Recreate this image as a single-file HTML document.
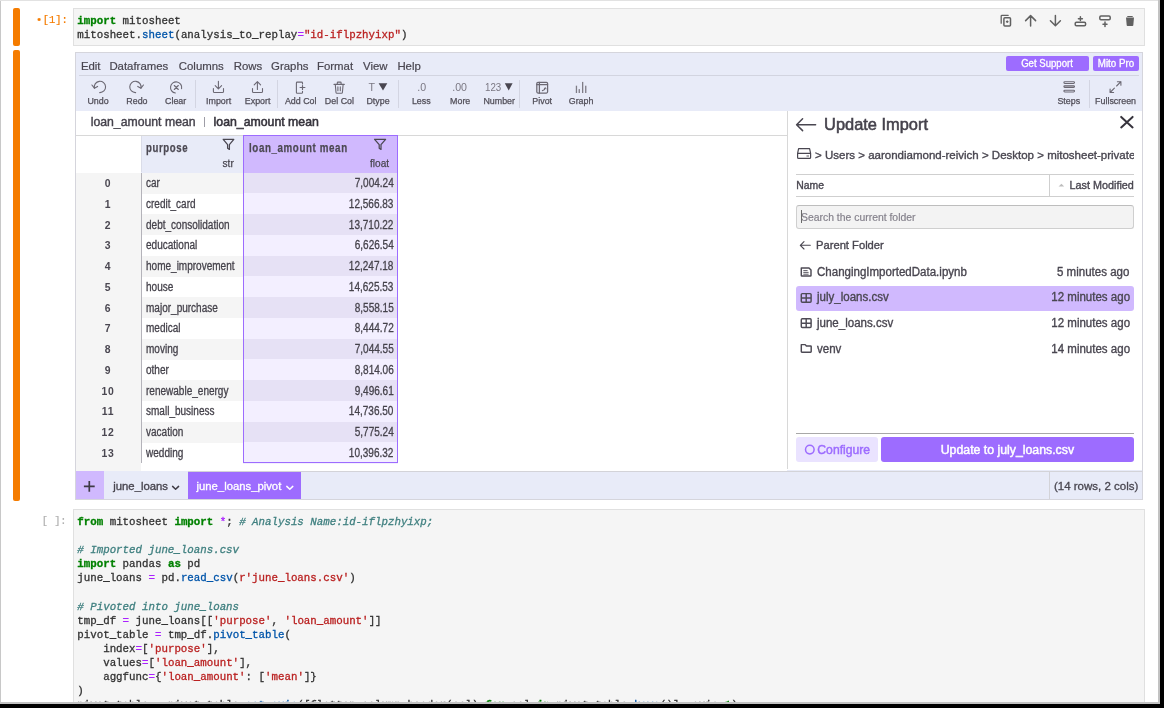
<!DOCTYPE html>
<html><head><meta charset="utf-8"><style>
html,body{margin:0;padding:0;width:1164px;height:708px;overflow:hidden;background:#000;}
#r{will-change:transform;position:relative;width:1164px;height:708px;overflow:hidden;}
#r div{position:absolute;}
#r .t{white-space:pre;}
svg{position:absolute;overflow:visible;}
</style></head><body><div id="r">
<div style="left:0px;top:0px;width:1164px;height:708px;background:#000;"></div>
<div style="left:0px;top:0px;width:1160px;height:704px;background:#fff;"></div>
<div style="left:0px;top:0px;width:1px;height:704px;background:#c8c8c8;"></div>
<div style="left:0px;top:0px;width:1160px;height:1px;background:#e2e2e2;"></div>
<div style="left:1158px;top:0px;width:2px;height:704px;background:#c2c2c2;"></div>
<div style="left:0px;top:702px;width:1160px;height:2px;background:#c2c2c2;"></div>
<div style="left:13px;top:8px;width:7px;height:38px;background:#F57C00;border-radius:2px;"></div>
<div style="left:13px;top:50px;width:7px;height:451px;background:#F57C00;border-radius:2px;"></div>
<div style="left:73px;top:8px;width:1072px;height:38px;background:#F5F5F5;box-sizing:border-box;border:1px solid #E0E0E0;"></div>
<div class="t" style="left:36.1px;top:15.30px;font:normal 10.4px/10.4px 'Liberation Mono',monospace;color:#F57C00;transform-origin:left;-webkit-text-stroke:0.2px #F57C00;">•</div>
<div class="t" style="right:1096.2px;top:15.20px;font:normal 10.4px/10.4px 'Liberation Mono',monospace;color:#F57C00;transform-origin:right;-webkit-text-stroke:0.2px #F57C00;">[1]:</div>
<div class="t" style="left:77.3px;top:16.20px;font:normal 10.79px/10.79px 'Liberation Mono',monospace;color:#008000;transform-origin:left;-webkit-text-stroke:0.3px #008000;font-weight:bold;">import</div>
<div class="t" style="left:116.144px;top:16.20px;font:normal 10.79px/10.79px 'Liberation Mono',monospace;color:#333333;transform-origin:left;-webkit-text-stroke:0.3px #333333;"> mitosheet</div>
<div class="t" style="left:77.3px;top:30.20px;font:normal 10.79px/10.79px 'Liberation Mono',monospace;color:#333333;transform-origin:left;-webkit-text-stroke:0.3px #333333;">mitosheet.</div>
<div class="t" style="left:142.04000000000002px;top:30.20px;font:normal 10.79px/10.79px 'Liberation Mono',monospace;color:#0055AA;transform-origin:left;-webkit-text-stroke:0.3px #0055AA;">sheet</div>
<div class="t" style="left:174.41000000000003px;top:30.20px;font:normal 10.79px/10.79px 'Liberation Mono',monospace;color:#333333;transform-origin:left;-webkit-text-stroke:0.3px #333333;">(analysis_to_replay</div>
<div class="t" style="left:297.41600000000005px;top:30.20px;font:normal 10.79px/10.79px 'Liberation Mono',monospace;color:#AA22FF;transform-origin:left;-webkit-text-stroke:0.3px #AA22FF;">=</div>
<div class="t" style="left:303.89000000000004px;top:30.20px;font:normal 10.79px/10.79px 'Liberation Mono',monospace;color:#BA2121;transform-origin:left;-webkit-text-stroke:0.3px #BA2121;">&quot;id-iflpzhyixp&quot;</div>
<div class="t" style="left:401.00000000000006px;top:30.20px;font:normal 10.79px/10.79px 'Liberation Mono',monospace;color:#333333;transform-origin:left;-webkit-text-stroke:0.3px #333333;">)</div>
<div style="left:75px;top:52px;width:1068px;height:448px;background:#E8EBF8;box-sizing:border-box;border:1px solid #D5D5DC;"></div>
<div class="t" style="left:80.9px;top:60.60px;font:normal 11.4px/11.4px 'Liberation Sans',sans-serif;color:#494650;transform-origin:left;-webkit-text-stroke:0.2px #494650;">Edit</div>
<div class="t" style="left:109.4px;top:60.60px;font:normal 11.4px/11.4px 'Liberation Sans',sans-serif;color:#494650;transform-origin:left;-webkit-text-stroke:0.2px #494650;">Dataframes</div>
<div class="t" style="left:178.8px;top:60.60px;font:normal 11.4px/11.4px 'Liberation Sans',sans-serif;color:#494650;transform-origin:left;-webkit-text-stroke:0.2px #494650;">Columns</div>
<div class="t" style="left:233.8px;top:60.60px;font:normal 11.4px/11.4px 'Liberation Sans',sans-serif;color:#494650;transform-origin:left;-webkit-text-stroke:0.2px #494650;">Rows</div>
<div class="t" style="left:271.09999999999997px;top:60.60px;font:normal 11.4px/11.4px 'Liberation Sans',sans-serif;color:#494650;transform-origin:left;-webkit-text-stroke:0.2px #494650;">Graphs</div>
<div class="t" style="left:317.0px;top:60.60px;font:normal 11.4px/11.4px 'Liberation Sans',sans-serif;color:#494650;transform-origin:left;-webkit-text-stroke:0.2px #494650;">Format</div>
<div class="t" style="left:363.0px;top:60.60px;font:normal 11.4px/11.4px 'Liberation Sans',sans-serif;color:#494650;transform-origin:left;-webkit-text-stroke:0.2px #494650;">View</div>
<div class="t" style="left:397.4px;top:60.60px;font:normal 11.4px/11.4px 'Liberation Sans',sans-serif;color:#494650;transform-origin:left;-webkit-text-stroke:0.2px #494650;">Help</div>
<div style="left:79px;top:75px;width:1060px;height:1px;background:#D2D4E0;"></div>
<div style="left:1006.4px;top:56.4px;width:82.4px;height:14.4px;background:#9D6CFF;border-radius:2px;"></div>
<div class="t" style="left:547.4000000000001px;width:1000px;text-align:center;top:58.90px;font:normal 10.1px/10.1px 'Liberation Sans',sans-serif;color:#fff;transform:scaleX(0.95);transform-origin:center;-webkit-text-stroke:0.3px #fff;">Get Support</div>
<div style="left:1093.4px;top:56.4px;width:45.6px;height:14.4px;background:#9D6CFF;border-radius:2px;"></div>
<div class="t" style="left:616.0999999999999px;width:1000px;text-align:center;top:58.90px;font:normal 10.1px/10.1px 'Liberation Sans',sans-serif;color:#fff;transform:scaleX(0.97);transform-origin:center;-webkit-text-stroke:0.3px #fff;">Mito Pro</div>
<div class="t" style="left:-402px;width:1000px;text-align:center;top:97.10px;font:normal 8.9px/8.9px 'Liberation Sans',sans-serif;color:#514e58;transform-origin:center;-webkit-text-stroke:0.25px #514e58;">Undo</div>
<div class="t" style="left:-363.1px;width:1000px;text-align:center;top:97.10px;font:normal 8.9px/8.9px 'Liberation Sans',sans-serif;color:#514e58;transform-origin:center;-webkit-text-stroke:0.25px #514e58;">Redo</div>
<div class="t" style="left:-324.4px;width:1000px;text-align:center;top:97.10px;font:normal 8.9px/8.9px 'Liberation Sans',sans-serif;color:#514e58;transform-origin:center;-webkit-text-stroke:0.25px #514e58;">Clear</div>
<div class="t" style="left:-281.4px;width:1000px;text-align:center;top:97.10px;font:normal 8.9px/8.9px 'Liberation Sans',sans-serif;color:#514e58;transform-origin:center;-webkit-text-stroke:0.25px #514e58;">Import</div>
<div class="t" style="left:-242.39999999999998px;width:1000px;text-align:center;top:97.10px;font:normal 8.9px/8.9px 'Liberation Sans',sans-serif;color:#514e58;transform-origin:center;-webkit-text-stroke:0.25px #514e58;">Export</div>
<div class="t" style="left:-199.3px;width:1000px;text-align:center;top:97.10px;font:normal 8.9px/8.9px 'Liberation Sans',sans-serif;color:#514e58;transform-origin:center;-webkit-text-stroke:0.25px #514e58;">Add Col</div>
<div class="t" style="left:-160.60000000000002px;width:1000px;text-align:center;top:97.10px;font:normal 8.9px/8.9px 'Liberation Sans',sans-serif;color:#514e58;transform-origin:center;-webkit-text-stroke:0.25px #514e58;">Del Col</div>
<div class="t" style="left:-122px;width:1000px;text-align:center;top:97.10px;font:normal 8.9px/8.9px 'Liberation Sans',sans-serif;color:#514e58;transform-origin:center;-webkit-text-stroke:0.25px #514e58;">Dtype</div>
<div class="t" style="left:-78.69999999999999px;width:1000px;text-align:center;top:97.10px;font:normal 8.9px/8.9px 'Liberation Sans',sans-serif;color:#514e58;transform-origin:center;-webkit-text-stroke:0.25px #514e58;">Less</div>
<div class="t" style="left:-39.80000000000001px;width:1000px;text-align:center;top:97.10px;font:normal 8.9px/8.9px 'Liberation Sans',sans-serif;color:#514e58;transform-origin:center;-webkit-text-stroke:0.25px #514e58;">More</div>
<div class="t" style="left:-0.8000000000000114px;width:1000px;text-align:center;top:97.10px;font:normal 8.9px/8.9px 'Liberation Sans',sans-serif;color:#514e58;transform-origin:center;-webkit-text-stroke:0.25px #514e58;">Number</div>
<div class="t" style="left:42.200000000000045px;width:1000px;text-align:center;top:97.10px;font:normal 8.9px/8.9px 'Liberation Sans',sans-serif;color:#514e58;transform-origin:center;-webkit-text-stroke:0.25px #514e58;">Pivot</div>
<div class="t" style="left:81.10000000000002px;width:1000px;text-align:center;top:97.10px;font:normal 8.9px/8.9px 'Liberation Sans',sans-serif;color:#514e58;transform-origin:center;-webkit-text-stroke:0.25px #514e58;">Graph</div>
<div class="t" style="left:568.8px;width:1000px;text-align:center;top:97.10px;font:normal 8.9px/8.9px 'Liberation Sans',sans-serif;color:#514e58;transform-origin:center;-webkit-text-stroke:0.25px #514e58;">Steps</div>
<div class="t" style="left:615.5999999999999px;width:1000px;text-align:center;top:97.10px;font:normal 8.9px/8.9px 'Liberation Sans',sans-serif;color:#514e58;transform-origin:center;-webkit-text-stroke:0.25px #514e58;">Fullscreen</div>
<div style="left:195.1px;top:80px;width:1px;height:28px;background:#D3D5E2;"></div>
<div style="left:277.0px;top:80px;width:1px;height:28px;background:#D3D5E2;"></div>
<div style="left:398.1px;top:80px;width:1px;height:28px;background:#D3D5E2;"></div>
<div style="left:518.6px;top:80px;width:1px;height:28px;background:#D3D5E2;"></div>
<div style="left:1088.6px;top:80px;width:1px;height:28px;background:#D3D5E2;"></div>
<svg style="left:0;top:0" width="1164" height="708" viewBox="0 0 1164 708">
<g fill="none" stroke="#6b6873" stroke-width="1.1" stroke-linecap="round" stroke-linejoin="round">
<!-- undo -->
<path d="M94.4 88.1 A5.65 5.65 0 1 1 99.7 92.6"/><path d="M91.9 85 L94.4 88.2 L97.6 86.4"/>
<!-- redo -->
<path d="M140.95 88.1 A5.65 5.65 0 1 0 135.65 92.6"/><path d="M143.45 85 L140.95 88.2 L137.75 86.4"/>
<!-- clear -->
<path d="M181.6 88.6 A5.6 5.6 0 1 0 175.4 93.0"/><path d="M174.3 85.5 L178.3 89.5 M178.3 85.5 L174.3 89.5"/>
<!-- import -->
<path d="M218.4 81.2 V88.6 M215.2 85.6 L218.4 88.8 L221.6 85.6"/><path d="M213.4 88.6 V91.4 Q213.4 92.5 214.5 92.5 H222.4 Q223.5 92.5 223.5 91.4 V88.6"/>
<!-- export -->
<path d="M257.4 89.4 V81.8 M254.2 84.8 L257.4 81.6 L260.6 84.8"/><path d="M252.5 88.6 V91.4 Q252.5 92.5 253.6 92.5 H261.4 Q262.5 92.5 262.5 91.4 V88.6"/>
<!-- add col -->
<path d="M302.5 83.9 V82.9 Q302.5 82.1 301.7 82.1 H297.2 Q296.4 82.1 296.4 82.9 V92.4 Q296.4 93.2 297.2 93.2 H301.7 Q302.5 93.2 302.5 92.4 V91.2"/><path d="M300.1 87.5 H304.9 M302.5 85.7 V89.4" stroke-width="1.2"/>
<!-- del col -->
<path d="M334 84.4 H344.3 M337.3 84.2 V82.8 Q337.3 82.1 338 82.1 H340.4 Q341.1 82.1 341.1 82.8 V84.2"/><path d="M335.3 84.6 L336 92.5 Q336.1 93.3 336.9 93.3 H341.5 Q342.3 93.3 342.4 92.5 L343.1 84.6"/><path d="M337.9 86.9 V90.7 M340.3 86.9 V90.7"/>
<!-- pivot -->
<rect x="536.8" y="82.4" width="10.8" height="10.6" rx="1.2" stroke-width="1.25"/><path d="M536.8 84.5 H547.6 M539.4 82.4 V93" stroke-width="1.25"/><path d="M542.4 90.6 Q544.8 90.4 545.2 88.1" stroke-width="1.1"/><path d="M544.1 88.9 L545.2 87.7 L546.2 88.9" stroke-width="0.9"/>
<!-- steps -->
<rect x="1063.9" y="81.7" width="10.6" height="1.8" rx="0.9"/><rect x="1063.9" y="85.7" width="10.6" height="1.8" rx="0.9" fill="#a9a7b0"/><rect x="1063.9" y="90.2" width="10.6" height="1.8" rx="0.9"/>
<!-- fullscreen -->
<path d="M1116.6 86 L1120.9 81.7 M1117.4 81.7 H1120.9 V85.2"/><path d="M1114.4 88.2 L1110.1 92.5 M1113.6 92.5 H1110.1 V89"/>
</g>
<g fill="#7f7c86">
<!-- graph bars -->
<rect x="575.8" y="85.7" width="1.3" height="7.3"/><rect x="578.6" y="89.1" width="1.3" height="3.9"/><rect x="582" y="81.9" width="1.3" height="11.1"/><rect x="585.1" y="85.7" width="1.3" height="7.3"/>
</g>
</svg>
<div class="t" style="left:368.6px;top:82.4px;font:normal 10.6px/10.6px 'Liberation Sans',sans-serif;color:#7b7883;">T</div>
<svg style="left:0;top:0" width="1164" height="708"><path d="M378.6 83.3 H387.3 L383 90.6 Z" fill="#494650"/><path d="M504.8 83.3 H512.6 L508.7 90.6 Z" fill="#494650"/></svg>
<div class="t" style="left:417.2px;top:82.0px;font:normal 10.6px/10.6px 'Liberation Sans',sans-serif;color:#7b7883;">.0</div>
<div class="t" style="left:452.2px;top:82.0px;font:normal 10.6px/10.6px 'Liberation Sans',sans-serif;color:#7b7883;">.00</div>
<div class="t" style="left:485.2px;top:82.0px;font:normal 10.6px/10.6px 'Liberation Sans',sans-serif;color:#7b7883;transform:scaleX(0.92);transform-origin:left;">123</div>
<svg style="left:0;top:0" width="1164" height="708">
<g fill="none" stroke="#616161" stroke-width="1.5" stroke-linecap="round" stroke-linejoin="round">
<rect x="1003.9" y="17.7" width="6.6" height="8.4" rx="1"/><path d="M1001.2 23.2 V16.1 Q1001.2 15.3 1002 15.3 H1008.2" stroke-width="1.3"/><path d="M1007.2 20.9 V22.5 M1006.4 21.7 H1008" stroke-width="1.2"/>
<path d="M1030.6 26 V15.8 M1025.6 20.6 L1030.6 15.6 L1035.6 20.6"/>
<path d="M1055.4 15.4 V25.6 M1050.4 20.8 L1055.4 25.8 L1060.4 20.8"/>
<rect x="1075.2" y="22.2" width="10.4" height="3.6" rx="1.2"/><path d="M1080.4 16.8 V20.6 M1078.4 18.7 H1082.4"/>
<rect x="1099.8" y="16.1" width="10.4" height="3.6" rx="1.2"/><path d="M1105 22 V26.4 M1103 24.2 H1107"/>
</g>
<path d="M1126 17.6 H1134 L1133.3 25.2 Q1133.2 25.9 1132.5 25.9 H1127.5 Q1126.8 25.9 1126.7 25.2 Z M1127.6 16 H1132.4 L1133 17 H1127 Z" fill="#616161"/>
</svg>
<div style="left:75px;top:111px;width:712px;height:24px;background:#fff;"></div>
<div class="t" style="left:90.7px;top:116.30px;font:normal 12.25px/12.25px 'Liberation Sans',sans-serif;color:#45424c;transform-origin:left;-webkit-text-stroke:0.4px #45424c;">loan_amount mean</div>
<div style="left:204.2px;top:117.2px;width:1.1px;height:10.2px;background:#9e9da6;"></div>
<div class="t" style="left:213.6px;top:116.30px;font:normal 12.3px/12.3px 'Liberation Sans',sans-serif;color:#36333c;transform-origin:left;-webkit-text-stroke:0.55px #36333c;">loan_amount mean</div>
<div style="left:75px;top:135.4px;width:712px;height:335.6px;background:#fff;"></div>
<div style="left:75px;top:172.5px;width:66.4px;height:298.5px;background:#F5F5F5;"></div>
<div style="left:141.4px;top:135.4px;width:101.8px;height:37.7px;background:#E8EBF8;"></div>
<div style="left:243.2px;top:135.4px;width:155.3px;height:37.7px;background:#D0B9FE;"></div>
<div style="left:141.4px;top:172.5px;width:101.8px;height:21.360000000000003px;background:#F5F5F5;"></div>
<div style="left:243.2px;top:172.5px;width:155.3px;height:21.360000000000003px;background:#E6E1F5;"></div>
<div class="t" style="left:-392.2px;width:1000px;text-align:center;top:178.10px;font:bold 11.8px/11.8px 'Liberation Sans',sans-serif;color:#4a4751;transform:scaleX(0.88);transform-origin:center;letter-spacing:0.8px;">0</div>
<div class="t" style="left:146.4px;top:177.10px;font:normal 12px/12px 'Liberation Sans',sans-serif;color:#45424b;transform:scaleX(0.835);transform-origin:left;-webkit-text-stroke:0.3px #45424b;">car</div>
<div class="t" style="right:770.4px;top:177.10px;font:normal 12px/12px 'Liberation Sans',sans-serif;color:#45424b;transform:scaleX(0.835);transform-origin:right;-webkit-text-stroke:0.3px #45424b;">7,004.24</div>
<div style="left:243.2px;top:193.26px;width:155.3px;height:21.360000000000003px;background:#F3EFFF;"></div>
<div class="t" style="left:-392.2px;width:1000px;text-align:center;top:198.86px;font:bold 11.8px/11.8px 'Liberation Sans',sans-serif;color:#4a4751;transform:scaleX(0.88);transform-origin:center;letter-spacing:0.8px;">1</div>
<div class="t" style="left:146.4px;top:197.86px;font:normal 12px/12px 'Liberation Sans',sans-serif;color:#45424b;transform:scaleX(0.835);transform-origin:left;-webkit-text-stroke:0.3px #45424b;">credit_card</div>
<div class="t" style="right:770.4px;top:197.86px;font:normal 12px/12px 'Liberation Sans',sans-serif;color:#45424b;transform:scaleX(0.835);transform-origin:right;-webkit-text-stroke:0.3px #45424b;">12,566.83</div>
<div style="left:141.4px;top:214.02px;width:101.8px;height:21.360000000000003px;background:#F5F5F5;"></div>
<div style="left:243.2px;top:214.02px;width:155.3px;height:21.360000000000003px;background:#E6E1F5;"></div>
<div class="t" style="left:-392.2px;width:1000px;text-align:center;top:219.62px;font:bold 11.8px/11.8px 'Liberation Sans',sans-serif;color:#4a4751;transform:scaleX(0.88);transform-origin:center;letter-spacing:0.8px;">2</div>
<div class="t" style="left:146.4px;top:218.62px;font:normal 12px/12px 'Liberation Sans',sans-serif;color:#45424b;transform:scaleX(0.835);transform-origin:left;-webkit-text-stroke:0.3px #45424b;">debt_consolidation</div>
<div class="t" style="right:770.4px;top:218.62px;font:normal 12px/12px 'Liberation Sans',sans-serif;color:#45424b;transform:scaleX(0.835);transform-origin:right;-webkit-text-stroke:0.3px #45424b;">13,710.22</div>
<div style="left:243.2px;top:234.78px;width:155.3px;height:21.360000000000003px;background:#F3EFFF;"></div>
<div class="t" style="left:-392.2px;width:1000px;text-align:center;top:240.38px;font:bold 11.8px/11.8px 'Liberation Sans',sans-serif;color:#4a4751;transform:scaleX(0.88);transform-origin:center;letter-spacing:0.8px;">3</div>
<div class="t" style="left:146.4px;top:239.38px;font:normal 12px/12px 'Liberation Sans',sans-serif;color:#45424b;transform:scaleX(0.835);transform-origin:left;-webkit-text-stroke:0.3px #45424b;">educational</div>
<div class="t" style="right:770.4px;top:239.38px;font:normal 12px/12px 'Liberation Sans',sans-serif;color:#45424b;transform:scaleX(0.835);transform-origin:right;-webkit-text-stroke:0.3px #45424b;">6,626.54</div>
<div style="left:141.4px;top:255.54000000000002px;width:101.8px;height:21.360000000000003px;background:#F5F5F5;"></div>
<div style="left:243.2px;top:255.54000000000002px;width:155.3px;height:21.360000000000003px;background:#E6E1F5;"></div>
<div class="t" style="left:-392.2px;width:1000px;text-align:center;top:261.14px;font:bold 11.8px/11.8px 'Liberation Sans',sans-serif;color:#4a4751;transform:scaleX(0.88);transform-origin:center;letter-spacing:0.8px;">4</div>
<div class="t" style="left:146.4px;top:260.14px;font:normal 12px/12px 'Liberation Sans',sans-serif;color:#45424b;transform:scaleX(0.835);transform-origin:left;-webkit-text-stroke:0.3px #45424b;">home_improvement</div>
<div class="t" style="right:770.4px;top:260.14px;font:normal 12px/12px 'Liberation Sans',sans-serif;color:#45424b;transform:scaleX(0.835);transform-origin:right;-webkit-text-stroke:0.3px #45424b;">12,247.18</div>
<div style="left:243.2px;top:276.3px;width:155.3px;height:21.360000000000003px;background:#F3EFFF;"></div>
<div class="t" style="left:-392.2px;width:1000px;text-align:center;top:281.90px;font:bold 11.8px/11.8px 'Liberation Sans',sans-serif;color:#4a4751;transform:scaleX(0.88);transform-origin:center;letter-spacing:0.8px;">5</div>
<div class="t" style="left:146.4px;top:280.90px;font:normal 12px/12px 'Liberation Sans',sans-serif;color:#45424b;transform:scaleX(0.835);transform-origin:left;-webkit-text-stroke:0.3px #45424b;">house</div>
<div class="t" style="right:770.4px;top:280.90px;font:normal 12px/12px 'Liberation Sans',sans-serif;color:#45424b;transform:scaleX(0.835);transform-origin:right;-webkit-text-stroke:0.3px #45424b;">14,625.53</div>
<div style="left:141.4px;top:297.06px;width:101.8px;height:21.360000000000003px;background:#F5F5F5;"></div>
<div style="left:243.2px;top:297.06px;width:155.3px;height:21.360000000000003px;background:#E6E1F5;"></div>
<div class="t" style="left:-392.2px;width:1000px;text-align:center;top:302.66px;font:bold 11.8px/11.8px 'Liberation Sans',sans-serif;color:#4a4751;transform:scaleX(0.88);transform-origin:center;letter-spacing:0.8px;">6</div>
<div class="t" style="left:146.4px;top:301.66px;font:normal 12px/12px 'Liberation Sans',sans-serif;color:#45424b;transform:scaleX(0.835);transform-origin:left;-webkit-text-stroke:0.3px #45424b;">major_purchase</div>
<div class="t" style="right:770.4px;top:301.66px;font:normal 12px/12px 'Liberation Sans',sans-serif;color:#45424b;transform:scaleX(0.835);transform-origin:right;-webkit-text-stroke:0.3px #45424b;">8,558.15</div>
<div style="left:243.2px;top:317.82000000000005px;width:155.3px;height:21.360000000000003px;background:#F3EFFF;"></div>
<div class="t" style="left:-392.2px;width:1000px;text-align:center;top:323.42px;font:bold 11.8px/11.8px 'Liberation Sans',sans-serif;color:#4a4751;transform:scaleX(0.88);transform-origin:center;letter-spacing:0.8px;">7</div>
<div class="t" style="left:146.4px;top:322.42px;font:normal 12px/12px 'Liberation Sans',sans-serif;color:#45424b;transform:scaleX(0.835);transform-origin:left;-webkit-text-stroke:0.3px #45424b;">medical</div>
<div class="t" style="right:770.4px;top:322.42px;font:normal 12px/12px 'Liberation Sans',sans-serif;color:#45424b;transform:scaleX(0.835);transform-origin:right;-webkit-text-stroke:0.3px #45424b;">8,444.72</div>
<div style="left:141.4px;top:338.58000000000004px;width:101.8px;height:21.360000000000003px;background:#F5F5F5;"></div>
<div style="left:243.2px;top:338.58000000000004px;width:155.3px;height:21.360000000000003px;background:#E6E1F5;"></div>
<div class="t" style="left:-392.2px;width:1000px;text-align:center;top:344.18px;font:bold 11.8px/11.8px 'Liberation Sans',sans-serif;color:#4a4751;transform:scaleX(0.88);transform-origin:center;letter-spacing:0.8px;">8</div>
<div class="t" style="left:146.4px;top:343.18px;font:normal 12px/12px 'Liberation Sans',sans-serif;color:#45424b;transform:scaleX(0.835);transform-origin:left;-webkit-text-stroke:0.3px #45424b;">moving</div>
<div class="t" style="right:770.4px;top:343.18px;font:normal 12px/12px 'Liberation Sans',sans-serif;color:#45424b;transform:scaleX(0.835);transform-origin:right;-webkit-text-stroke:0.3px #45424b;">7,044.55</div>
<div style="left:243.2px;top:359.34000000000003px;width:155.3px;height:21.360000000000003px;background:#F3EFFF;"></div>
<div class="t" style="left:-392.2px;width:1000px;text-align:center;top:364.94px;font:bold 11.8px/11.8px 'Liberation Sans',sans-serif;color:#4a4751;transform:scaleX(0.88);transform-origin:center;letter-spacing:0.8px;">9</div>
<div class="t" style="left:146.4px;top:363.94px;font:normal 12px/12px 'Liberation Sans',sans-serif;color:#45424b;transform:scaleX(0.835);transform-origin:left;-webkit-text-stroke:0.3px #45424b;">other</div>
<div class="t" style="right:770.4px;top:363.94px;font:normal 12px/12px 'Liberation Sans',sans-serif;color:#45424b;transform:scaleX(0.835);transform-origin:right;-webkit-text-stroke:0.3px #45424b;">8,814.06</div>
<div style="left:141.4px;top:380.1px;width:101.8px;height:21.360000000000003px;background:#F5F5F5;"></div>
<div style="left:243.2px;top:380.1px;width:155.3px;height:21.360000000000003px;background:#E6E1F5;"></div>
<div class="t" style="left:-392.2px;width:1000px;text-align:center;top:385.70px;font:bold 11.8px/11.8px 'Liberation Sans',sans-serif;color:#4a4751;transform:scaleX(0.88);transform-origin:center;letter-spacing:0.8px;">10</div>
<div class="t" style="left:146.4px;top:384.70px;font:normal 12px/12px 'Liberation Sans',sans-serif;color:#45424b;transform:scaleX(0.835);transform-origin:left;-webkit-text-stroke:0.3px #45424b;">renewable_energy</div>
<div class="t" style="right:770.4px;top:384.70px;font:normal 12px/12px 'Liberation Sans',sans-serif;color:#45424b;transform:scaleX(0.835);transform-origin:right;-webkit-text-stroke:0.3px #45424b;">9,496.61</div>
<div style="left:243.2px;top:400.86px;width:155.3px;height:21.360000000000003px;background:#F3EFFF;"></div>
<div class="t" style="left:-392.2px;width:1000px;text-align:center;top:406.46px;font:bold 11.8px/11.8px 'Liberation Sans',sans-serif;color:#4a4751;transform:scaleX(0.88);transform-origin:center;letter-spacing:0.8px;">11</div>
<div class="t" style="left:146.4px;top:405.46px;font:normal 12px/12px 'Liberation Sans',sans-serif;color:#45424b;transform:scaleX(0.835);transform-origin:left;-webkit-text-stroke:0.3px #45424b;">small_business</div>
<div class="t" style="right:770.4px;top:405.46px;font:normal 12px/12px 'Liberation Sans',sans-serif;color:#45424b;transform:scaleX(0.835);transform-origin:right;-webkit-text-stroke:0.3px #45424b;">14,736.50</div>
<div style="left:141.4px;top:421.62px;width:101.8px;height:21.360000000000003px;background:#F5F5F5;"></div>
<div style="left:243.2px;top:421.62px;width:155.3px;height:21.360000000000003px;background:#E6E1F5;"></div>
<div class="t" style="left:-392.2px;width:1000px;text-align:center;top:427.22px;font:bold 11.8px/11.8px 'Liberation Sans',sans-serif;color:#4a4751;transform:scaleX(0.88);transform-origin:center;letter-spacing:0.8px;">12</div>
<div class="t" style="left:146.4px;top:426.22px;font:normal 12px/12px 'Liberation Sans',sans-serif;color:#45424b;transform:scaleX(0.835);transform-origin:left;-webkit-text-stroke:0.3px #45424b;">vacation</div>
<div class="t" style="right:770.4px;top:426.22px;font:normal 12px/12px 'Liberation Sans',sans-serif;color:#45424b;transform:scaleX(0.835);transform-origin:right;-webkit-text-stroke:0.3px #45424b;">5,775.24</div>
<div style="left:243.2px;top:442.38px;width:155.3px;height:21.360000000000003px;background:#F3EFFF;"></div>
<div class="t" style="left:-392.2px;width:1000px;text-align:center;top:447.98px;font:bold 11.8px/11.8px 'Liberation Sans',sans-serif;color:#4a4751;transform:scaleX(0.88);transform-origin:center;letter-spacing:0.8px;">13</div>
<div class="t" style="left:146.4px;top:446.98px;font:normal 12px/12px 'Liberation Sans',sans-serif;color:#45424b;transform:scaleX(0.835);transform-origin:left;-webkit-text-stroke:0.3px #45424b;">wedding</div>
<div class="t" style="right:770.4px;top:446.98px;font:normal 12px/12px 'Liberation Sans',sans-serif;color:#45424b;transform:scaleX(0.835);transform-origin:right;-webkit-text-stroke:0.3px #45424b;">10,396.32</div>
<div style="left:141px;top:172.5px;width:1px;height:290.69999999999993px;background:#b4b3ba;"></div>
<div style="left:141px;top:135.4px;width:1px;height:37.1px;background:#DADCE8;"></div>
<div style="left:75px;top:134.8px;width:712px;height:1px;background:#D8D8D8;"></div>
<div style="left:243.2px;top:135.4px;width:155.3px;height:327.79999999999995px;background:transparent;box-sizing:border-box;border:1px solid #9D6CFF;"></div>
<div class="t" style="left:146.4px;top:140.50px;font:bold 13px/13px 'Liberation Sans',sans-serif;color:#4c4953;transform:scaleX(0.74);transform-origin:left;letter-spacing:0.8px;-webkit-text-stroke:0.25px #4c4953;">purpose</div>
<div class="t" style="left:248.8px;top:141.30px;font:bold 13px/13px 'Liberation Sans',sans-serif;color:#4c4953;transform:scaleX(0.752);transform-origin:left;letter-spacing:0.8px;-webkit-text-stroke:0.25px #4c4953;">loan_amount mean</div>
<div class="t" style="right:930.0px;top:157.90px;font:normal 10.6px/10.6px 'Liberation Sans',sans-serif;color:#494650;transform:scaleX(0.95);transform-origin:right;-webkit-text-stroke:0.25px #494650;">str</div>
<div class="t" style="right:775.0px;top:157.90px;font:normal 10.6px/10.6px 'Liberation Sans',sans-serif;color:#494650;transform:scaleX(0.95);transform-origin:right;-webkit-text-stroke:0.25px #494650;">float</div>
<svg style="left:0;top:0" width="1164" height="708">
<g fill="none" stroke="#494650" stroke-width="1.25" stroke-linejoin="round">
<path d="M223.2 139.3 H233.8 L229.4 144.6 V149.4 L227.6 148.2 V144.6 Z"/>
<path d="M374.6 139.3 H385.6 L381 144.6 V149.4 L379.2 148.2 V144.6 Z"/>
</g></svg>
<div style="left:787px;top:111px;width:355px;height:359px;background:#fff;"></div>
<div style="left:786.5px;top:111px;width:1px;height:358px;background:#D8D8D8;"></div>
<div class="t" style="left:824.1px;top:115.50px;font:normal 16.4px/16.4px 'Liberation Sans',sans-serif;color:#45424c;transform-origin:left;-webkit-text-stroke:0.55px #45424c;">Update Import</div>
<div class="t" style="left:815.1px;top:149.90px;font:normal 11.5px/11.5px 'Liberation Sans',sans-serif;color:#494650;transform-origin:left;-webkit-text-stroke:0.35px #494650;width:319px;overflow:hidden;white-space:nowrap;">&gt; Users &gt; aarondiamond-reivich &gt; Desktop &gt; mitosheet-private</div>
<div style="left:795.6px;top:173.8px;width:338.4px;height:1px;background:#CFCFCF;"></div>
<div style="left:795.6px;top:196.1px;width:338.4px;height:1px;background:#CFCFCF;"></div>
<div style="left:1049px;top:174px;width:1px;height:22.5px;background:#CFCFCF;"></div>
<div class="t" style="left:796.3px;top:180.80px;font:normal 10.4px/10.4px 'Liberation Sans',sans-serif;color:#494650;transform-origin:left;-webkit-text-stroke:0.35px #494650;">Name</div>
<div class="t" style="right:30.200000000000045px;top:179.80px;font:normal 10.8px/10.8px 'Liberation Sans',sans-serif;color:#494650;transform-origin:right;-webkit-text-stroke:0.35px #494650;">Last Modified</div>
<div style="left:795.9px;top:204.5px;width:338.1px;height:24.5px;background:#F3F3F3;box-sizing:border-box;border:1px solid #CFCFCF;border-top-color:#BDBDBD;border-radius:3px;"></div>
<div class="t" style="left:801.2px;top:211.70px;font:normal 11.2px/11.2px 'Liberation Sans',sans-serif;color:#85828c;transform:scaleX(0.93);transform-origin:left;-webkit-text-stroke:0.2px #85828c;">Search the current folder</div>
<div style="left:800.6px;top:210.2px;width:1px;height:12.4px;background:#6a6a6a;"></div>
<div class="t" style="left:816px;top:240.30px;font:normal 11.2px/11.2px 'Liberation Sans',sans-serif;color:#494650;transform-origin:left;-webkit-text-stroke:0.35px #494650;">Parent Folder</div>
<div style="left:795.6px;top:285.5px;width:338.2px;height:25.7px;background:#D0B9FE;border-radius:3px;"></div>
<svg style="left:0;top:0" width="1164" height="708">
<g fill="none" stroke="#494650" stroke-width="1.5" stroke-linecap="round" stroke-linejoin="round">
<path d="M797 124.7 H815.6 M802.6 118.8 L796.6 124.7 L802.6 130.6"/>
<path d="M1121.2 116.9 L1132.6 127.4 M1132.6 116.9 L1121.2 127.4" stroke="#36333c" stroke-width="2"/>
</g>
<g fill="none" stroke="#494650" stroke-width="1.2" stroke-linejoin="round">
<path d="M798.6 148.6 H809.6 L810.6 153.4 V157.4 Q810.6 158.4 809.6 158.4 H798.6 Q797.6 158.4 797.6 157.4 V153.4 Z M797.6 153.4 H810.6"/>
<path d="M806.5 156 H809" stroke-width="0.9"/>
</g>
<g fill="none" stroke="#494650" stroke-width="1.1" stroke-linecap="round" stroke-linejoin="round">
<path d="M800.3 245.3 H810.3 M804 241.6 L800.3 245.3 L804 249"/>
</g>
<g fill="none" stroke="#4d4a54" stroke-width="1.45" stroke-linejoin="round">
<path d="M801.3 268 H809 L811 270 V275.4 Q811 276 810.4 276 H801.9 Q801.3 276 801.3 275.4 Z"/><path d="M803.3 270.6 H807.6 M803.3 272.4 H808.6 M803.3 274.2 H808.6" stroke-width="0.9"/>
<rect x="801.3" y="293.6" width="9.8" height="8.6" rx="1"/><path d="M801.3 297.9 H811.1 M806.2 293.6 V302.2"/>
<rect x="801.3" y="318.8" width="9.8" height="8.8" rx="1"/><path d="M801.3 323.2 H811.1 M806.2 318.8 V327.6"/>
<path d="M801.3 344.6 H805.2 L806.4 346 H810.6 Q811.2 346 811.2 346.6 V351.6 Q811.2 352.3 810.6 352.3 H801.9 Q801.3 352.3 801.3 351.6 Z"/>
</g>
<path d="M1058.6 186.6 L1061.4 183.8 L1064.2 186.6 Z" fill="#bdbdbd"/>
</svg>
<div class="t" style="left:816.8px;top:265.60px;font:normal 12px/12px 'Liberation Sans',sans-serif;color:#494650;transform:scaleX(0.96);transform-origin:left;-webkit-text-stroke:0.35px #494650;">ChangingImportedData.ipynb</div>
<div class="t" style="right:34.200000000000045px;top:265.60px;font:normal 12px/12px 'Liberation Sans',sans-serif;color:#494650;transform:scaleX(0.96);transform-origin:right;-webkit-text-stroke:0.35px #494650;">5 minutes ago</div>
<div class="t" style="left:816.8px;top:291.40px;font:normal 12px/12px 'Liberation Sans',sans-serif;color:#494650;transform:scaleX(0.96);transform-origin:left;-webkit-text-stroke:0.35px #494650;">july_loans.csv</div>
<div class="t" style="right:34.200000000000045px;top:291.40px;font:normal 12px/12px 'Liberation Sans',sans-serif;color:#494650;transform:scaleX(0.96);transform-origin:right;-webkit-text-stroke:0.35px #494650;">12 minutes ago</div>
<div class="t" style="left:816.8px;top:317.20px;font:normal 12px/12px 'Liberation Sans',sans-serif;color:#494650;transform:scaleX(0.96);transform-origin:left;-webkit-text-stroke:0.35px #494650;">june_loans.csv</div>
<div class="t" style="right:34.200000000000045px;top:317.20px;font:normal 12px/12px 'Liberation Sans',sans-serif;color:#494650;transform:scaleX(0.96);transform-origin:right;-webkit-text-stroke:0.35px #494650;">12 minutes ago</div>
<div class="t" style="left:816.8px;top:343.00px;font:normal 12px/12px 'Liberation Sans',sans-serif;color:#494650;transform:scaleX(0.96);transform-origin:left;-webkit-text-stroke:0.35px #494650;">venv</div>
<div class="t" style="right:34.200000000000045px;top:343.00px;font:normal 12px/12px 'Liberation Sans',sans-serif;color:#494650;transform:scaleX(0.96);transform-origin:right;-webkit-text-stroke:0.35px #494650;">14 minutes ago</div>
<div style="left:795.6px;top:432.6px;width:338.4px;height:1.5px;background:#A8A8A8;"></div>
<div style="left:795.9px;top:437.2px;width:82.5px;height:24.7px;background:#EAE3FF;border-radius:3px;"></div>
<div class="t" style="left:817.3px;top:443.60px;font:normal 12.2px/12.2px 'Liberation Sans',sans-serif;color:#9D6CFF;transform-origin:left;-webkit-text-stroke:0.45px #9D6CFF;">Configure</div>
<div style="left:880.8px;top:437.2px;width:253.5px;height:24.7px;background:#9D6CFF;border-radius:3px;"></div>
<svg style="left:0;top:0" width="1164" height="708"><circle cx="809.8" cy="449.6" r="4.3" fill="none" stroke="#9D6CFF" stroke-width="1.5"/></svg>
<div class="t" style="left:507.4px;width:1000px;text-align:center;top:443.60px;font:normal 12.3px/12.3px 'Liberation Sans',sans-serif;color:#fff;transform-origin:center;-webkit-text-stroke:0.45px #fff;">Update to july_loans.csv</div>
<div style="left:75px;top:470.7px;width:1067px;height:1px;background:#D3D3D8;"></div>
<div style="left:75px;top:471.2px;width:29.3px;height:27.8px;background:#D0B9FE;"></div>
<div style="left:104.3px;top:471.2px;width:83.5px;height:27.8px;background:#E8EBF8;"></div>
<div style="left:188px;top:471.8px;width:112.6px;height:27px;background:#9D6CFF;"></div>
<div class="t" style="left:113.3px;top:480.70px;font:normal 11.3px/11.3px 'Liberation Sans',sans-serif;color:#494650;transform-origin:left;-webkit-text-stroke:0.35px #494650;">june_loans</div>
<div class="t" style="left:196.5px;top:480.70px;font:normal 11.3px/11.3px 'Liberation Sans',sans-serif;color:#fff;transform-origin:left;-webkit-text-stroke:0.3px #fff;">june_loans_pivot</div>
<div style="left:1049px;top:471.2px;width:1px;height:27.8px;background:#D3D3D8;"></div>
<div class="t" style="right:25.700000000000045px;top:481.20px;font:normal 11.5px/11.5px 'Liberation Sans',sans-serif;color:#494650;transform-origin:right;-webkit-text-stroke:0.3px #494650;">(14 rows, 2 cols)</div>
<svg style="left:0;top:0" width="1164" height="708">
<g fill="none" stroke="#3e3b45" stroke-width="1.7" stroke-linecap="butt">
<path d="M83.9 486.4 H94.7 M89.3 481 V491.8"/>
</g>
<g fill="none" stroke-width="1.5" stroke-linecap="round" stroke-linejoin="round">
<path d="M172.6 486.4 L175.6 489.2 L178.6 486.4" stroke="#3e3b45"/>
<path d="M286.8 486.4 L289.8 489.2 L292.8 486.4" stroke="#ffffff"/>
</g></svg>
<div style="left:75px;top:52px;width:1068px;height:448px;background:transparent;box-sizing:border-box;border:1px solid #D5D5DC;"></div>
<div style="left:73px;top:509.3px;width:1072px;height:200px;background:#F5F5F5;box-sizing:border-box;border:1px solid #E0E0E0;"></div>
<div class="t" style="right:1097.4px;top:516.20px;font:normal 10.4px/10.4px 'Liberation Mono',monospace;color:#b0b0b0;transform-origin:right;-webkit-text-stroke:0.2px #b0b0b0;">[ ]:</div>
<div class="t" style="left:77.3px;top:517.10px;font:normal 10.79px/10.79px 'Liberation Mono',monospace;color:#008000;transform-origin:left;-webkit-text-stroke:0.3px #008000;font-weight:bold;">from</div>
<div class="t" style="left:103.196px;top:517.10px;font:normal 10.79px/10.79px 'Liberation Mono',monospace;color:#333333;transform-origin:left;-webkit-text-stroke:0.3px #333333;"> mitosheet </div>
<div class="t" style="left:174.41px;top:517.10px;font:normal 10.79px/10.79px 'Liberation Mono',monospace;color:#008000;transform-origin:left;-webkit-text-stroke:0.3px #008000;font-weight:bold;">import</div>
<div class="t" style="left:213.254px;top:517.10px;font:normal 10.79px/10.79px 'Liberation Mono',monospace;color:#333333;transform-origin:left;-webkit-text-stroke:0.3px #333333;"> </div>
<div class="t" style="left:219.72799999999998px;top:517.10px;font:normal 10.79px/10.79px 'Liberation Mono',monospace;color:#AA22FF;transform-origin:left;-webkit-text-stroke:0.3px #AA22FF;">*</div>
<div class="t" style="left:226.20199999999997px;top:517.10px;font:normal 10.79px/10.79px 'Liberation Mono',monospace;color:#333333;transform-origin:left;-webkit-text-stroke:0.3px #333333;">; </div>
<div class="t" style="left:239.14999999999998px;top:517.10px;font:normal 10.79px/10.79px 'Liberation Mono',monospace;color:#408080;transform-origin:left;-webkit-text-stroke:0.3px #408080;font-style:italic;"># Analysis Name:id-iflpzhyixp;</div>
<div class="t" style="left:77.3px;top:545.24px;font:normal 10.79px/10.79px 'Liberation Mono',monospace;color:#408080;transform-origin:left;-webkit-text-stroke:0.3px #408080;font-style:italic;"># Imported june_loans.csv</div>
<div class="t" style="left:77.3px;top:559.31px;font:normal 10.79px/10.79px 'Liberation Mono',monospace;color:#008000;transform-origin:left;-webkit-text-stroke:0.3px #008000;font-weight:bold;">import</div>
<div class="t" style="left:116.144px;top:559.31px;font:normal 10.79px/10.79px 'Liberation Mono',monospace;color:#333333;transform-origin:left;-webkit-text-stroke:0.3px #333333;"> pandas </div>
<div class="t" style="left:167.936px;top:559.31px;font:normal 10.79px/10.79px 'Liberation Mono',monospace;color:#008000;transform-origin:left;-webkit-text-stroke:0.3px #008000;font-weight:bold;">as</div>
<div class="t" style="left:180.88400000000001px;top:559.31px;font:normal 10.79px/10.79px 'Liberation Mono',monospace;color:#333333;transform-origin:left;-webkit-text-stroke:0.3px #333333;"> pd</div>
<div class="t" style="left:77.3px;top:573.38px;font:normal 10.79px/10.79px 'Liberation Mono',monospace;color:#333333;transform-origin:left;-webkit-text-stroke:0.3px #333333;">june_loans </div>
<div class="t" style="left:148.514px;top:573.38px;font:normal 10.79px/10.79px 'Liberation Mono',monospace;color:#AA22FF;transform-origin:left;-webkit-text-stroke:0.3px #AA22FF;">=</div>
<div class="t" style="left:154.988px;top:573.38px;font:normal 10.79px/10.79px 'Liberation Mono',monospace;color:#333333;transform-origin:left;-webkit-text-stroke:0.3px #333333;"> pd.</div>
<div class="t" style="left:180.88400000000001px;top:573.38px;font:normal 10.79px/10.79px 'Liberation Mono',monospace;color:#0055AA;transform-origin:left;-webkit-text-stroke:0.3px #0055AA;">read_csv</div>
<div class="t" style="left:232.67600000000002px;top:573.38px;font:normal 10.79px/10.79px 'Liberation Mono',monospace;color:#333333;transform-origin:left;-webkit-text-stroke:0.3px #333333;">(</div>
<div class="t" style="left:239.15px;top:573.38px;font:normal 10.79px/10.79px 'Liberation Mono',monospace;color:#BA2121;transform-origin:left;-webkit-text-stroke:0.3px #BA2121;">r&#x27;june_loans.csv&#x27;</div>
<div class="t" style="left:349.208px;top:573.38px;font:normal 10.79px/10.79px 'Liberation Mono',monospace;color:#333333;transform-origin:left;-webkit-text-stroke:0.3px #333333;">)</div>
<div class="t" style="left:77.3px;top:601.52px;font:normal 10.79px/10.79px 'Liberation Mono',monospace;color:#408080;transform-origin:left;-webkit-text-stroke:0.3px #408080;font-style:italic;"># Pivoted into june_loans</div>
<div class="t" style="left:77.3px;top:615.59px;font:normal 10.79px/10.79px 'Liberation Mono',monospace;color:#333333;transform-origin:left;-webkit-text-stroke:0.3px #333333;">tmp_df </div>
<div class="t" style="left:122.618px;top:615.59px;font:normal 10.79px/10.79px 'Liberation Mono',monospace;color:#AA22FF;transform-origin:left;-webkit-text-stroke:0.3px #AA22FF;">=</div>
<div class="t" style="left:129.09199999999998px;top:615.59px;font:normal 10.79px/10.79px 'Liberation Mono',monospace;color:#333333;transform-origin:left;-webkit-text-stroke:0.3px #333333;"> june_loans[[</div>
<div class="t" style="left:213.254px;top:615.59px;font:normal 10.79px/10.79px 'Liberation Mono',monospace;color:#BA2121;transform-origin:left;-webkit-text-stroke:0.3px #BA2121;">&#x27;purpose&#x27;</div>
<div class="t" style="left:271.52px;top:615.59px;font:normal 10.79px/10.79px 'Liberation Mono',monospace;color:#333333;transform-origin:left;-webkit-text-stroke:0.3px #333333;">, </div>
<div class="t" style="left:284.46799999999996px;top:615.59px;font:normal 10.79px/10.79px 'Liberation Mono',monospace;color:#BA2121;transform-origin:left;-webkit-text-stroke:0.3px #BA2121;">&#x27;loan_amount&#x27;</div>
<div class="t" style="left:368.63px;top:615.59px;font:normal 10.79px/10.79px 'Liberation Mono',monospace;color:#333333;transform-origin:left;-webkit-text-stroke:0.3px #333333;">]]</div>
<div class="t" style="left:77.3px;top:629.66px;font:normal 10.79px/10.79px 'Liberation Mono',monospace;color:#333333;transform-origin:left;-webkit-text-stroke:0.3px #333333;">pivot_table </div>
<div class="t" style="left:154.988px;top:629.66px;font:normal 10.79px/10.79px 'Liberation Mono',monospace;color:#AA22FF;transform-origin:left;-webkit-text-stroke:0.3px #AA22FF;">=</div>
<div class="t" style="left:161.462px;top:629.66px;font:normal 10.79px/10.79px 'Liberation Mono',monospace;color:#333333;transform-origin:left;-webkit-text-stroke:0.3px #333333;"> tmp_df.</div>
<div class="t" style="left:213.254px;top:629.66px;font:normal 10.79px/10.79px 'Liberation Mono',monospace;color:#0055AA;transform-origin:left;-webkit-text-stroke:0.3px #0055AA;">pivot_table</div>
<div class="t" style="left:284.46799999999996px;top:629.66px;font:normal 10.79px/10.79px 'Liberation Mono',monospace;color:#333333;transform-origin:left;-webkit-text-stroke:0.3px #333333;">(</div>
<div class="t" style="left:77.3px;top:643.73px;font:normal 10.79px/10.79px 'Liberation Mono',monospace;color:#333333;transform-origin:left;-webkit-text-stroke:0.3px #333333;">    index</div>
<div class="t" style="left:135.566px;top:643.73px;font:normal 10.79px/10.79px 'Liberation Mono',monospace;color:#AA22FF;transform-origin:left;-webkit-text-stroke:0.3px #AA22FF;">=</div>
<div class="t" style="left:142.04px;top:643.73px;font:normal 10.79px/10.79px 'Liberation Mono',monospace;color:#333333;transform-origin:left;-webkit-text-stroke:0.3px #333333;">[</div>
<div class="t" style="left:148.51399999999998px;top:643.73px;font:normal 10.79px/10.79px 'Liberation Mono',monospace;color:#BA2121;transform-origin:left;-webkit-text-stroke:0.3px #BA2121;">&#x27;purpose&#x27;</div>
<div class="t" style="left:206.77999999999997px;top:643.73px;font:normal 10.79px/10.79px 'Liberation Mono',monospace;color:#333333;transform-origin:left;-webkit-text-stroke:0.3px #333333;">],</div>
<div class="t" style="left:77.3px;top:657.80px;font:normal 10.79px/10.79px 'Liberation Mono',monospace;color:#333333;transform-origin:left;-webkit-text-stroke:0.3px #333333;">    values</div>
<div class="t" style="left:142.04000000000002px;top:657.80px;font:normal 10.79px/10.79px 'Liberation Mono',monospace;color:#AA22FF;transform-origin:left;-webkit-text-stroke:0.3px #AA22FF;">=</div>
<div class="t" style="left:148.514px;top:657.80px;font:normal 10.79px/10.79px 'Liberation Mono',monospace;color:#333333;transform-origin:left;-webkit-text-stroke:0.3px #333333;">[</div>
<div class="t" style="left:154.988px;top:657.80px;font:normal 10.79px/10.79px 'Liberation Mono',monospace;color:#BA2121;transform-origin:left;-webkit-text-stroke:0.3px #BA2121;">&#x27;loan_amount&#x27;</div>
<div class="t" style="left:239.15px;top:657.80px;font:normal 10.79px/10.79px 'Liberation Mono',monospace;color:#333333;transform-origin:left;-webkit-text-stroke:0.3px #333333;">],</div>
<div class="t" style="left:77.3px;top:671.87px;font:normal 10.79px/10.79px 'Liberation Mono',monospace;color:#333333;transform-origin:left;-webkit-text-stroke:0.3px #333333;">    aggfunc</div>
<div class="t" style="left:148.514px;top:671.87px;font:normal 10.79px/10.79px 'Liberation Mono',monospace;color:#AA22FF;transform-origin:left;-webkit-text-stroke:0.3px #AA22FF;">=</div>
<div class="t" style="left:154.988px;top:671.87px;font:normal 10.79px/10.79px 'Liberation Mono',monospace;color:#333333;transform-origin:left;-webkit-text-stroke:0.3px #333333;">{</div>
<div class="t" style="left:161.462px;top:671.87px;font:normal 10.79px/10.79px 'Liberation Mono',monospace;color:#BA2121;transform-origin:left;-webkit-text-stroke:0.3px #BA2121;">&#x27;loan_amount&#x27;</div>
<div class="t" style="left:245.624px;top:671.87px;font:normal 10.79px/10.79px 'Liberation Mono',monospace;color:#333333;transform-origin:left;-webkit-text-stroke:0.3px #333333;">: [</div>
<div class="t" style="left:265.046px;top:671.87px;font:normal 10.79px/10.79px 'Liberation Mono',monospace;color:#BA2121;transform-origin:left;-webkit-text-stroke:0.3px #BA2121;">&#x27;mean&#x27;</div>
<div class="t" style="left:303.89px;top:671.87px;font:normal 10.79px/10.79px 'Liberation Mono',monospace;color:#333333;transform-origin:left;-webkit-text-stroke:0.3px #333333;">]}</div>
<div class="t" style="left:77.3px;top:685.94px;font:normal 10.79px/10.79px 'Liberation Mono',monospace;color:#333333;transform-origin:left;-webkit-text-stroke:0.3px #333333;">)</div>
<div class="t" style="left:77.3px;top:700.01px;font:normal 10.79px/10.79px 'Liberation Mono',monospace;color:#333333;transform-origin:left;-webkit-text-stroke:0.3px #333333;">pivot_table </div>
<div class="t" style="left:154.988px;top:700.01px;font:normal 10.79px/10.79px 'Liberation Mono',monospace;color:#AA22FF;transform-origin:left;-webkit-text-stroke:0.3px #AA22FF;">=</div>
<div class="t" style="left:161.462px;top:700.01px;font:normal 10.79px/10.79px 'Liberation Mono',monospace;color:#333333;transform-origin:left;-webkit-text-stroke:0.3px #333333;"> pivot_table.</div>
<div class="t" style="left:245.624px;top:700.01px;font:normal 10.79px/10.79px 'Liberation Mono',monospace;color:#0055AA;transform-origin:left;-webkit-text-stroke:0.3px #0055AA;">set_axis</div>
<div class="t" style="left:297.416px;top:700.01px;font:normal 10.79px/10.79px 'Liberation Mono',monospace;color:#333333;transform-origin:left;-webkit-text-stroke:0.3px #333333;">([flatten_column_header(col) </div>
<div class="t" style="left:485.16200000000003px;top:700.01px;font:normal 10.79px/10.79px 'Liberation Mono',monospace;color:#008000;transform-origin:left;-webkit-text-stroke:0.3px #008000;font-weight:bold;">for</div>
<div class="t" style="left:504.58400000000006px;top:700.01px;font:normal 10.79px/10.79px 'Liberation Mono',monospace;color:#333333;transform-origin:left;-webkit-text-stroke:0.3px #333333;"> col </div>
<div class="t" style="left:536.9540000000001px;top:700.01px;font:normal 10.79px/10.79px 'Liberation Mono',monospace;color:#008000;transform-origin:left;-webkit-text-stroke:0.3px #008000;font-weight:bold;">in</div>
<div class="t" style="left:549.902px;top:700.01px;font:normal 10.79px/10.79px 'Liberation Mono',monospace;color:#333333;transform-origin:left;-webkit-text-stroke:0.3px #333333;"> pivot_table.</div>
<div class="t" style="left:634.0640000000001px;top:700.01px;font:normal 10.79px/10.79px 'Liberation Mono',monospace;color:#0055AA;transform-origin:left;-webkit-text-stroke:0.3px #0055AA;">keys</div>
<div class="t" style="left:659.96px;top:700.01px;font:normal 10.79px/10.79px 'Liberation Mono',monospace;color:#333333;transform-origin:left;-webkit-text-stroke:0.3px #333333;">()], axis</div>
<div class="t" style="left:718.226px;top:700.01px;font:normal 10.79px/10.79px 'Liberation Mono',monospace;color:#AA22FF;transform-origin:left;-webkit-text-stroke:0.3px #AA22FF;">=</div>
<div class="t" style="left:724.7px;top:700.01px;font:normal 10.79px/10.79px 'Liberation Mono',monospace;color:#008800;transform-origin:left;-webkit-text-stroke:0.3px #008800;">1</div>
<div class="t" style="left:731.1740000000001px;top:700.01px;font:normal 10.79px/10.79px 'Liberation Mono',monospace;color:#333333;transform-origin:left;-webkit-text-stroke:0.3px #333333;">)</div>
<div style="left:0px;top:702px;width:1160px;height:2px;background:#c2c2c2;"></div>
<div style="left:1158px;top:0px;width:2px;height:704px;background:#c2c2c2;"></div>
<div style="left:0px;top:704px;width:1164px;height:4px;background:#000;"></div>
<div style="left:1160px;top:0px;width:4px;height:708px;background:#000;"></div>
</div></body></html>
